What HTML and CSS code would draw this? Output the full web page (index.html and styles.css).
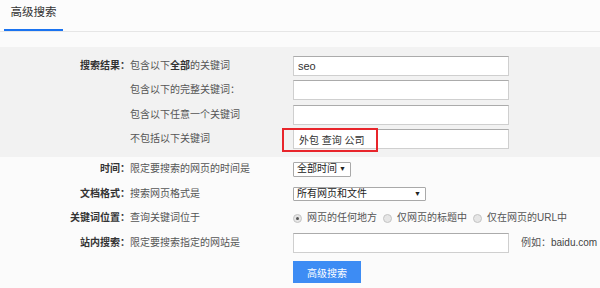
FILE: index.html
```html
<!DOCTYPE html>
<html lang="zh-CN">
<head>
<meta charset="utf-8">
<title>高级搜索</title>
<link rel="stylesheet" href="styles.css">
</head>
<body>
<div class="tabs">
  <div class="tab">高级搜索</div>
</div>
<div class="panel">
  <div class="row">
    <div class="label">搜索结果：</div>
    <div class="desc">包含以下<b>全部</b>的关键词</div>
    <div class="control"><input class="field" type="text" value="seo"></div>
  </div>
  <div class="row">
    <div class="label"></div>
    <div class="desc">包含以下的完整关键词：</div>
    <div class="control"><input class="field" type="text"></div>
  </div>
  <div class="row">
    <div class="label"></div>
    <div class="desc">包含以下任意一个关键词</div>
    <div class="control"><input class="field" type="text"></div>
  </div>
  <div class="row">
    <div class="label"></div>
    <div class="desc">不包括以下关键词</div>
    <div class="control"><input class="field cjk" type="text" value="外包 查询 公司"><span class="annot"></span></div>
  </div>
</div>
<div class="lower">
  <div class="row">
    <div class="label">时间：</div>
    <div class="desc">限定要搜索的网页的时间是</div>
    <div class="control"><span class="select sel-time"><span>全部时间</span><span class="arrow">▼</span></span></div>
  </div>
  <div class="row">
    <div class="label">文档格式：</div>
    <div class="desc">搜索网页格式是</div>
    <div class="control"><span class="select sel-doc"><span>所有网页和文件</span><span class="arrow">▼</span></span></div>
  </div>
  <div class="row">
    <div class="label">关键词位置：</div>
    <div class="desc">查询关键词位于</div>
    <div class="control radios">
      <span class="opt"><span class="radio checked"></span>网页的任何地方</span>
      <span class="opt"><span class="radio"></span>仅网页的标题中</span>
      <span class="opt"><span class="radio"></span>仅在网页的URL中</span>
    </div>
  </div>
  <div class="row">
    <div class="label">站内搜索：</div>
    <div class="desc">限定要搜索指定的网站是</div>
    <div class="control"><input class="field" type="text"><span class="example">例如：<span class="latin">baidu.com</span></span></div>
  </div>
  <div class="row btnrow">
    <div class="label"></div>
    <div class="desc"></div>
    <div class="control"><button class="btn" type="button">高级搜索</button></div>
  </div>
</div>
</body>
</html>
```

FILE: styles.css
```css
html, body {
  margin: 0;
  padding: 0;
}
body {
  width: 600px;
  height: 288px;
  overflow: hidden;
  background: #fbfbfb;
  font-family: "Liberation Sans", "Noto Sans CJK SC", sans-serif;
  font-size: 10px;
  color: #444;
}
.tabs {
  height: 31px;
  border-bottom: 1px solid #e6e6e6;
  background: #fcfcfc;
}
.tab {
  margin-left: 4px;
  width: 59px;
  height: 31px;
  box-sizing: border-box;
  border-bottom: 2px solid #1a73f0;
  text-align: center;
  font-size: 11.5px;
  line-height: 14px;
  padding-top: 5px;
  color: #333;
}
.panel {
  margin-top: 15px;
  background: #f2f2f2;
  padding: 9px 0 8px;
  display: flex;
  flex-direction: column;
  gap: 4.4px;
}
.panel .row {
  height: 20px;
}
.row {
  display: flex;
  align-items: center;
  line-height: 12px;
  white-space: nowrap;
}
.label {
  width: 130px;
  flex: none;
  text-align: right;
  font-weight: bold;
  color: #333;
}
.desc {
  width: 163px;
  flex: none;
  color: #555;
}
.desc b {
  color: #333;
}
.control {
  position: relative;
  display: flex;
  align-items: center;
  flex: none;
}
.field {
  width: 216px;
  height: 20px;
  box-sizing: border-box;
  margin: 0;
  border: 1px solid #cfcfcf;
  border-top-color: #ababab;
  background: #fff;
  padding: 0 4px;
  font-family: "Liberation Sans", "Noto Sans CJK SC", sans-serif;
  font-size: 11px;
  color: #333;
  outline: none;
}
.field.cjk {
  font-size: 10px;
  padding-left: 5px;
}
.annot {
  position: absolute;
  left: -11px;
  top: -1px;
  width: 96px;
  height: 24px;
  box-sizing: border-box;
  border: 2px solid #e8252b;
}
.lower {
  display: flex;
  flex-direction: column;
}
.lower .row {
  height: 24.5px;
}
.select {
  display: inline-flex;
  justify-content: space-between;
  align-items: center;
  box-sizing: border-box;
  border: 1px solid #a9a9a9;
  background: #fff;
  padding: 0 4px 0 3px;
  color: #222;
  border-radius: 1px;
}
.sel-time {
  width: 58px;
  height: 15px;
}
.sel-doc {
  width: 133px;
  height: 14px;
}
.arrow {
  font-size: 7px;
  color: #222;
}
.radios {
  color: #555;
}
.opt {
  display: inline-flex;
  align-items: center;
  margin-right: 6px;
}
.radio {
  width: 9px;
  height: 9px;
  box-sizing: border-box;
  border-radius: 50%;
  border: 1px solid #c4c4c4;
  background: #e6e6e6;
  margin-right: 5px;
  position: relative;
}
.radio.checked::after {
  content: "";
  position: absolute;
  left: 2px;
  top: 2px;
  width: 3px;
  height: 3px;
  border-radius: 50%;
  background: #555;
}
.example {
  margin-left: 12px;
  color: #555;
  font-size: 10px;
  white-space: nowrap;
}
.example .latin {
  color: #444;
}
.btnrow.row {
  height: 22px;
  margin-top: 6px;
}
.btn {
  width: 68px;
  height: 22px;
  border: none;
  margin: 0;
  background: #3d8cf4;
  color: #fff;
  font-family: "Liberation Sans", "Noto Sans CJK SC", sans-serif;
  font-size: 10px;
  padding: 0;
}
```
